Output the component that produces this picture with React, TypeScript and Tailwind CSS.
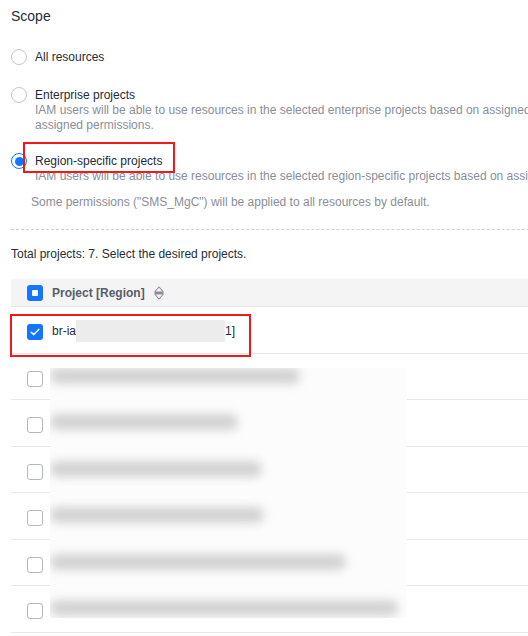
const rowHeights = ["h-[47px]", "h-[46px]", "h-[47px]", "h-[46px]", "h-[47px]", "h-[46px]", "h-[47px]"];

// widths of the redacted project names, rows 2-7
const blurred = ["w-[250px]", "w-[188px]", "w-[212px]", "w-[214px]", "w-[296px]", "w-[348px]"];

function Radio({ checked }: { checked?: boolean }) {
  if (checked) {
    return (
      <span className="flex h-4 w-4 shrink-0 items-center justify-center rounded-full border-[1.5px] border-[#1476ff] bg-white">
        <span className="h-[9px] w-[9px] rounded-full bg-[#1476ff]" />
      </span>
    );
  }
  return <span className="h-4 w-4 shrink-0 rounded-full border border-[#c4c6cc] bg-white" />;
}

function Checkbox({ state }: { state: "off" | "on" | "part" }) {
  if (state === "off") {
    return <span className="block h-4 w-4 shrink-0 rounded-[3px] border border-[#b3b6bd] bg-white" />;
  }
  return (
    <span className="flex h-4 w-4 shrink-0 items-center justify-center rounded-[3px] bg-[#1476ff]">
      {state === "part" ? (
        <span className="h-[6px] w-[6px] rounded-[1px] bg-white" />
      ) : (
        <svg width="10" height="8" viewBox="0 0 10 8" fill="none">
          <path d="M1.2 4.2 L3.8 6.6 L8.8 1.4" stroke="white" strokeWidth="1.5" strokeLinecap="round" strokeLinejoin="round" />
        </svg>
      )}
    </span>
  );
}

function SortIcon() {
  return (
    <svg width="10" height="14" viewBox="0 0 10 14" fill="none">
      <path d="M5 1 L9 5.5 L9 8.5 L5 13 L1 8.5 L1 5.5 Z" stroke="#8a8e99" strokeWidth="1.1" strokeLinejoin="round" />
      <rect x="1" y="5.5" width="8" height="3" fill="#8a8e99" />
    </svg>
  );
}

export default function App() {
  return (
    <div className="relative h-[636px] w-[528px] overflow-hidden bg-white font-['Liberation_Sans',Arial,sans-serif] text-[12px] text-[#252b3a]">
      <div className="w-[720px] pl-[11px]">
        <div className="pt-[7px] text-[14px] leading-[18px]">Scope</div>

        <div className="mt-[24px] flex items-center gap-[8px]">
          <Radio />
          <span className="leading-[16px]">All resources</span>
        </div>

        <div className="mt-[22px] flex items-start gap-[8px]">
          <Radio />
          <div>
            <div className="leading-[16px]">Enterprise projects</div>
            <div className="whitespace-nowrap leading-[15px] text-[#8a8e99]">
              IAM users will be able to use resources in the selected enterprise projects based on assigned
            </div>
            <div className="whitespace-nowrap leading-[15px] text-[#8a8e99]">assigned permissions.</div>
          </div>
        </div>

        <div className="mt-[20px] flex items-start gap-[8px]">
          <Radio checked />
          <div>
            <div className="relative leading-[16px]">
              Region-specific projects
              <span className="absolute left-[-12px] top-[-11px] h-[31px] w-[152px] border-2 border-[#f01818]" />
            </div>
            <div className="whitespace-nowrap leading-[15px] text-[#8a8e99]">
              IAM users will be able to use resources in the selected region-specific projects based on assigned permissions.
            </div>
          </div>
        </div>

        <div className="ml-[20px] mt-[11px] leading-[15px] text-[#8a8e99]">
          Some permissions ("SMS_MgC") will be applied to all resources by default.
        </div>

        <div className="mt-[19px] border-t border-dashed border-[#cfd0d3]" />

        <div className="mt-[17px] leading-[15px]">Total projects: 7. Select the desired projects.</div>

        <div className="relative mt-[17px]">
          <div className="flex h-[28px] items-center border-b border-[#e6e6e6] bg-[#f4f4f4] pl-[16px]">
            <Checkbox state="part" />
            <span className="ml-[9px] font-bold text-[#575d6c]">Project [Region]</span>
            <span className="ml-[9px] flex">
              <SortIcon />
            </span>
          </div>

          {rowHeights.map((h, i) => (
            <div key={i} className={`flex items-start border-b border-[#e8e8e8] pl-[16px] ${h}`}>
              <span className="mt-[17px]">
                <Checkbox state={i === 0 ? "on" : "off"} />
              </span>
              {i === 0 && (
                <div className="relative ml-[9px] mt-[13px] flex items-center leading-[16px]">
                  <span>br-ia</span>
                  <span className="h-[22px] w-[149px] bg-[#ececec] blur-[0.6px]" />
                  <span>1]</span>
                  <span className="absolute left-[-42px] top-[-6px] h-[43px] w-[241px] border-2 border-[#f01818]" />
                </div>
              )}
            </div>
          ))}

          {/* redacted project names */}
          <div className="absolute left-[39px] top-[89px] h-[250px] w-[357px] overflow-hidden bg-[#fcfcfc]">
            <div className="-mt-[13px] flex flex-col">
              {blurred.map((w, i) => (
                <div key={i} className={`pt-[13px] ${rowHeights[i + 1]}`}>
                  <div className={`h-[16px] rounded-[8px] bg-[#d2d2d2] blur-[5px] ${w}`} />
                </div>
              ))}
            </div>
          </div>
        </div>
      </div>
    </div>
  );
}
